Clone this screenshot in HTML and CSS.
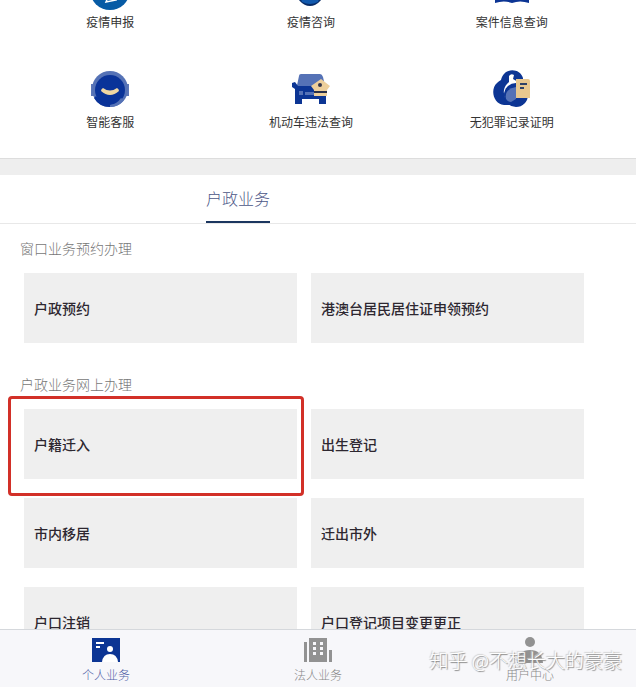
FILE: index.html
```html
<!DOCTYPE html>
<html lang="zh-CN">
<head>
    <meta charset="UTF-8">
    <meta name="viewport" content="width=device-width, initial-scale=1.0">
    <title>户政业务</title>
    <link rel="stylesheet" href="styles.css">
</head>
<body>
    <main>
        <!-- 常用服务 -->
        <section class="services">
            <a class="service" href="#">
                <svg class="service-icon" viewBox="0 0 40 40">
                    <circle cx="20" cy="20" r="20" fill="#075ba5"/>
                    <path d="M16 32l5-12 5 10z" fill="none" stroke="#fff" stroke-width="1.5"/>
                </svg>
                <span>疫情申报</span>
            </a>
            <a class="service" href="#">
                <svg class="service-icon" viewBox="0 0 40 40">
                    <ellipse cx="19" cy="20" rx="14" ry="16" fill="#082b66"/>
                    <path d="M8 24h22l-3 8q-8 4-16 0z" fill="#1259ad"/>
                </svg>
                <span>疫情咨询</span>
            </a>
            <a class="service" href="#">
                <svg class="service-icon" viewBox="0 0 40 40">
                    <path d="M3 7q9-4 17 1 8-5 17-1v26q-9-3-17 0-8-3-17 0z" fill="#0c3594"/>
                </svg>
                <span>案件信息查询</span>
            </a>
            <a class="service" href="#">
                <svg class="service-icon" viewBox="0 0 40 40">
                    <path d="M1 14h5v12H1zM34 14h5v12h-5z" fill="#5d78b9"/>
                    <circle cx="20" cy="19" r="18" fill="#5572b6"/>
                    <circle cx="20" cy="20" r="15" fill="#0a3399"/>
                    <path d="M20 35v2q9 0 14-7l-3-2q-4 6-11 7z" fill="#5572b6"/>
                    <path d="M4 28q5 9 16 9v-4q-9 0-14-7z" fill="#0a3399"/>
                    <path d="M13 18q7 5 14 0 2 1 2 3-9 8-18 0 0-2 2-3z" fill="#f1d7a2"/>
                </svg>
                <span>智能客服</span>
            </a>
            <a class="service" href="#">
                <svg class="service-icon" viewBox="0 0 40 40">
                    <path d="M10 4h19q2 0 3 3l3 13H5L8 6q0-2 2-2z" fill="#5572b6"/>
                    <path d="M1 13l3-1 3 4h28v18h-7v-5H11v5H4V19l-3-2z" fill="#0c3594"/>
                    <path d="M8 21h4v4H8zM14 22h10v3H14z" fill="#5572b6"/>
                    <path d="M30 9l9 7-3 4v6H23v-6l-3-4z" fill="#edcf9b"/>
                    <path d="M23 21h13v2H23z" fill="#28304a"/>
                    <circle cx="29" cy="15" r="2" fill="#34364b"/>
                </svg>
                <span>机动车违法查询</span>
            </a>
            <a class="service" href="#">
                <svg class="service-icon" viewBox="0 0 40 40">
                    <path d="M9 10C12-3 28-2 31 8v27H12C1 34-2 19 5 13q2-2 4-3z" fill="#0c3594"/>
                    <path d="M17 6q2-3 5-1l-1 4 5 3-6 4q-8 5-5 15-4-5-3-11 1-5 5-8z" fill="#fff"/>
                    <circle cx="24" cy="25" r="12" fill="#0c3594"/>
                    <path d="M14 29q-2-10 10-12v12l-5 3q-3 0-5-3z" fill="#5572b6"/>
                    <path d="M24 9h12q2 0 2 2v17H24z" fill="#e8c88f"/>
                    <path d="M28 13h7v2h-7zM28 17h4v2h-4z" fill="#304266"/>
                </svg>
                <span>无犯罪记录证明</span>
            </a>
        </section>

        <nav class="tabs">
            <button class="tab active" type="button">户政业务</button>
        </nav>

        <section class="group">
            <h2 class="group-title">窗口业务预约办理</h2>
            <div class="cards">
                <a class="card" href="#">户政预约</a>
                <a class="card" href="#">港澳台居民居住证申领预约</a>
            </div>
        </section>

        <section class="group">
            <h2 class="group-title">户政业务网上办理</h2>
            <div class="cards">
                <a class="card marked" href="#">户籍迁入</a>
                <a class="card" href="#">出生登记</a>
                <a class="card" href="#">市内移居</a>
                <a class="card" href="#">迁出市外</a>
                <a class="card" href="#">户口注销</a>
                <a class="card" href="#">户口登记项目变更更正</a>
            </div>
        </section>
    </main>

    <!-- 底部导航 -->
    <nav class="bottom-nav">
        <a class="nav-item active" href="#">
            <svg class="nav-icon" viewBox="0 0 28 26">
                <path d="M0 1h28v24H0z" fill="#0c3594"/>
                <path d="M4 5h8v2H4zM4 9h4v2H4z" fill="#fff"/>
                <circle cx="18" cy="12" r="3" fill="#fff"/>
                <path d="M10 25q1-8 8-8t8 8z" fill="#fff"/>
            </svg>
            <span>个人业务</span>
        </a>
        <a class="nav-item" href="#">
            <svg class="nav-icon" viewBox="0 0 28 26">
                <path d="M0 5h3v20H0zM5 1h18v24H5zM25 13h3v12h-3z" fill="#929292"/>
                <path d="M9 5h3v3H9zM16 5h3v3h-3zM9 10h3v3H9zM16 10h3v3h-3zM9 15h3v3H9zM16 15h3v3h-3z" fill="#f7f7fa"/>
            </svg>
            <span>法人业务</span>
        </a>
        <a class="nav-item" href="#">
            <svg class="nav-icon" viewBox="0 0 28 26">
                <circle cx="14" cy="5" r="5" fill="#929292"/>
                <path d="M1 26q1-13 13-13t13 13z" fill="#929292"/>
            </svg>
            <span>用户中心</span>
        </a>
        <div class="watermark">知乎 @不想长大的豪豪</div>
    </nav>
</body>
</html>
```

FILE: styles.css
```css
* {
    box-sizing: border-box;
}
body {
    margin: 0;
    font-family: "Noto Sans CJK SC", sans-serif;
    background-color: #fff;
    color: #333;
}
a {
    color: inherit;
    text-decoration: none;
}

/* 常用服务 */
.services {
    display: grid;
    grid-template-columns: repeat(3, 1fr);
    row-gap: 38px;
    margin-top: -30px; /* 第一行只露出一部分 */
    padding: 0 24px 27px 10px;
}
.service {
    display: flex;
    flex-direction: column;
    align-items: center;
    gap: 2px;
    font-size: 12px;
    line-height: 20px;
}
.service-icon {
    width: 40px;
    height: 40px;
}

/* 标签页 */
.tabs {
    display: flex;
    padding-left: 206px;
    border-top: 16px solid #eee;
    border-bottom: 1px solid #e8e8e8;
    box-shadow: 0 -1px #ddd;
}
.tab {
    height: 48px;
    padding: 0;
    border: none;
    border-bottom: 2px solid transparent;
    background: none;
    font-family: inherit;
    font-size: 16px;
    font-weight: 300;
    color: #4b5687;
    cursor: pointer;
}
.tab.active {
    border-bottom-color: #1b365f;
}

/* 业务分组 */
.group {
    padding: 14px 52px 17px 24px;
}
.group-title {
    margin: 0 0 15px -4px;
    font-size: 14px;
    font-weight: 300;
    line-height: 20px;
    color: #777;
}
.cards {
    display: grid;
    grid-template-columns: 1fr 1fr;
    gap: 19px 14px;
}
.card {
    position: relative;
    display: flex;
    align-items: center;
    height: 70px;
    padding: 0 10px;
    background-color: #efefef;
    font-size: 14px;
    font-weight: 500;
    color: #2d2730;
}
.card.marked::after {
    content: "";
    position: absolute;
    inset: -13px -7px -17px -16px;
    z-index: 1;
    border: 3px solid #d23028;
    border-radius: 4px;
}

/* 底部导航 */
.bottom-nav {
    position: fixed;
    left: 0;
    right: 0;
    bottom: 0;
    z-index: 2;
    display: flex;
    background-color: #f7f7fa;
    border-top: 1px solid #d5d8dc;
}
.nav-item {
    flex: 1;
    display: flex;
    flex-direction: column;
    align-items: center;
    gap: 2px;
    padding: 7px 0 2px;
    font-size: 12px;
    font-weight: 300;
    line-height: 20px;
    color: #888;
}
.nav-item.active {
    color: #5263a8;
}
.nav-icon {
    width: 28px;
    height: 26px;
}
.watermark {
    position: absolute;
    right: 14px;
    bottom: 13px;
    font-size: 19px;
    font-weight: 300;
    line-height: 28px;
    color: #fff;
    text-shadow: 1px 1px 1px #888, -1px -1px 1px #ccc;
    pointer-events: none;
}
```
